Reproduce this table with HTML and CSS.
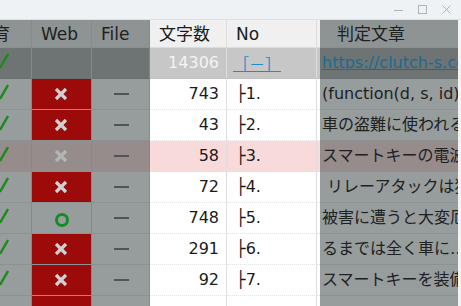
FILE: index.html
```html
<!DOCTYPE html>
<html lang="ja">
<head>
<meta charset="utf-8">
<link rel="stylesheet" href="styles.css">
</head>
<body>
<div class="window">
  <div class="titlebar">
    <div class="controls">
      <svg class="ctl" width="10" height="10" viewBox="0 0 10 10"><line x1="0" y1="5.5" x2="9" y2="5.5"/></svg>
      <svg class="ctl" width="10" height="10" viewBox="0 0 10 10"><rect x="0.5" y="0.5" width="8" height="8" fill="none"/></svg>
      <svg class="ctl" width="10" height="10" viewBox="0 0 10 10"><line x1="0.5" y1="0.5" x2="8.5" y2="8.5"/><line x1="8.5" y1="0.5" x2="0.5" y2="8.5"/></svg>
    </div>
  </div>
  <div class="table">
    <div class="row head">
      <div class="c c0 ov"><span class="clip">育</span></div>
      <div class="c web ov">Web</div>
      <div class="c file ov">File</div>
      <div class="c num">文字数</div>
      <div class="c no">No</div>
      <div class="c sp"></div>
      <div class="c txt ov">判定文章</div>
    </div>
    <div class="row sum">
      <div class="c c0 ov"><svg class="chk" width="12" height="16" viewBox="0 0 12 16"><line x1="3" y1="15" x2="11" y2="1"/></svg></div>
      <div class="c web ov"></div>
      <div class="c file ov"></div>
      <div class="c num">14306</div>
      <div class="c no"><a class="toggle">［－］</a></div>
      <div class="c sp"></div>
      <div class="c txt ov"><a class="url">https://clutch-s.com/</a></div>
    </div>
    <div class="row">
      <div class="c c0 ov"><svg class="chk" width="12" height="16" viewBox="0 0 12 16"><line x1="3" y1="15" x2="11" y2="1"/></svg></div>
      <div class="c web ov bad"><svg class="x" width="14" height="14" viewBox="0 0 14 14"><line x1="2" y1="2" x2="12" y2="12"/><line x1="12" y1="2" x2="2" y2="12"/></svg></div>
      <div class="c file ov"><span class="dash"></span></div>
      <div class="c num">743</div>
      <div class="c no">├1.</div>
      <div class="c sp"></div>
      <div class="c txt ov">(function(d, s, id) {</div>
    </div>
    <div class="row">
      <div class="c c0 ov"><svg class="chk" width="12" height="16" viewBox="0 0 12 16"><line x1="3" y1="15" x2="11" y2="1"/></svg></div>
      <div class="c web ov bad"><svg class="x" width="14" height="14" viewBox="0 0 14 14"><line x1="2" y1="2" x2="12" y2="12"/><line x1="12" y1="2" x2="2" y2="12"/></svg></div>
      <div class="c file ov"><span class="dash"></span></div>
      <div class="c num">43</div>
      <div class="c no">├2.</div>
      <div class="c sp"></div>
      <div class="c txt ov">車の盗難に使われる</div>
    </div>
    <div class="row pink">
      <div class="c c0 ov"><svg class="chk" width="12" height="16" viewBox="0 0 12 16"><line x1="3" y1="15" x2="11" y2="1"/></svg></div>
      <div class="c web ov"><svg class="x dim" width="14" height="14" viewBox="0 0 14 14"><line x1="2" y1="2" x2="12" y2="12"/><line x1="12" y1="2" x2="2" y2="12"/></svg></div>
      <div class="c file ov"><span class="dash"></span></div>
      <div class="c num">58</div>
      <div class="c no">├3.</div>
      <div class="c sp"></div>
      <div class="c txt ov">スマートキーの電波を</div>
    </div>
    <div class="row">
      <div class="c c0 ov"><svg class="chk" width="12" height="16" viewBox="0 0 12 16"><line x1="3" y1="15" x2="11" y2="1"/></svg></div>
      <div class="c web ov bad"><svg class="x" width="14" height="14" viewBox="0 0 14 14"><line x1="2" y1="2" x2="12" y2="12"/><line x1="12" y1="2" x2="2" y2="12"/></svg></div>
      <div class="c file ov"><span class="dash"></span></div>
      <div class="c num">72</div>
      <div class="c no">├4.</div>
      <div class="c sp"></div>
      <div class="c txt ov">&nbsp;リレーアタックは犯行</div>
    </div>
    <div class="row">
      <div class="c c0 ov"><svg class="chk" width="12" height="16" viewBox="0 0 12 16"><line x1="3" y1="15" x2="11" y2="1"/></svg></div>
      <div class="c web ov"><svg class="ok" width="16" height="16" viewBox="0 0 16 16"><circle cx="8" cy="8" r="5.5"/></svg></div>
      <div class="c file ov"><span class="dash"></span></div>
      <div class="c num">748</div>
      <div class="c no">├5.</div>
      <div class="c sp"></div>
      <div class="c txt ov">被害に遭うと大変厄介</div>
    </div>
    <div class="row">
      <div class="c c0 ov"><svg class="chk" width="12" height="16" viewBox="0 0 12 16"><line x1="3" y1="15" x2="11" y2="1"/></svg></div>
      <div class="c web ov bad"><svg class="x" width="14" height="14" viewBox="0 0 14 14"><line x1="2" y1="2" x2="12" y2="12"/><line x1="12" y1="2" x2="2" y2="12"/></svg></div>
      <div class="c file ov"><span class="dash"></span></div>
      <div class="c num">291</div>
      <div class="c no">├6.</div>
      <div class="c sp"></div>
      <div class="c txt ov">るまでは全く車に…盗難</div>
    </div>
    <div class="row">
      <div class="c c0 ov"><svg class="chk" width="12" height="16" viewBox="0 0 12 16"><line x1="3" y1="15" x2="11" y2="1"/></svg></div>
      <div class="c web ov bad"><svg class="x" width="14" height="14" viewBox="0 0 14 14"><line x1="2" y1="2" x2="12" y2="12"/><line x1="12" y1="2" x2="2" y2="12"/></svg></div>
      <div class="c file ov"><span class="dash"></span></div>
      <div class="c num">92</div>
      <div class="c no">├7.</div>
      <div class="c sp"></div>
      <div class="c txt ov">スマートキーを装備し</div>
    </div>
    <div class="row">
      <div class="c c0 ov"></div>
      <div class="c web ov bad"></div>
      <div class="c file ov"></div>
      <div class="c num"></div>
      <div class="c no"></div>
      <div class="c sp"></div>
      <div class="c txt ov"></div>
    </div>
  </div>
</div>
</body>
</html>
```

FILE: styles.css
```css
html, body {
  margin: 0;
  padding: 0;
}
body {
  width: 461px;
  height: 306px;
  overflow: hidden;
  background: #f3f3f3;
  font-family: "DejaVu Sans", "Noto Sans CJK JP", sans-serif;
  font-size: 16px;
  color: #1b1b1b;
}
.window {
  display: flex;
  flex-direction: column;
  height: 306px;
  overflow: hidden;
}
.titlebar {
  height: 19px;
  flex: none;
  background: #eef2f5;
  border-bottom: 1px solid #dde1e4;
  display: flex;
  justify-content: flex-end;
  align-items: center;
}
.controls {
  display: flex;
  gap: 14px;
  padding-right: 9px;
  padding-top: 1px;
}
.ctl {
  stroke: #aeb3b8;
  stroke-width: 1;
}
.table {
  width: 458px;
  overflow: hidden;
  flex: none;
}
.row {
  display: grid;
  grid-template-columns: 32px 60px 58px 77px 90px 3px 1fr;
  height: 31px;
}
.row.head {
  height: 28px;
}
.c {
  box-sizing: border-box;
  display: flex;
  align-items: center;
  white-space: nowrap;
  overflow: hidden;
  background: #ffffff;
  border-bottom: 1px dotted #e2e2e2;
  line-height: 1;
}
.c0, .web, .file, .num, .no {
  border-right: 1px solid #dedede;
}
/* dimmed (overlay) columns */
.ov {
  background: #979d9c;
  border-bottom: 1px solid #8c9291;
  color: #1d2121;
}
.c0.ov, .web.ov, .file.ov {
  border-right-color: #858b8a;
}
.head .c {
  background: #f0f0f0;
  border-bottom: 1px solid #dcdcdc;
  font-size: 17px;
  padding-top: 1px;
  justify-content: flex-start;
}
.head .ov {
  background: #8e9493;
  border-bottom-color: #8a908f;
}
.head .web, .head .file, .head .num, .head .no {
  padding-left: 9px;
  padding-right: 0;
}
.head .txt {
  padding-left: 17px;
}
.clip {
  margin-left: -7px;
}
.sum .c {
  background: #c7c7c7;
  border-bottom: 1px solid #c0c0c0;
}
.sum .ov {
  background: #6e7473;
  border-bottom-color: #6a706f;
}
.pink .c {
  background: #f9dada;
}
.pink .ov {
  background: #978c8c;
}
.num {
  justify-content: flex-end;
  padding-right: 7px;
}
.sum .num {
  color: #f4f4f4;
}
.no {
  padding-left: 9px;
}
.toggle {
  color: #1f8cd0;
  text-decoration: underline;
  margin-left: -3px;
  font-family: "Noto Sans CJK JP", sans-serif;
}
.txt {
  padding-left: 2px;
}
.url {
  color: #1b6a92;
  text-decoration: underline;
}
.web, .file {
  justify-content: center;
}
.web.bad {
  background: #9c0a0a;
}
.c0 .chk {
  margin-left: -3px;
  margin-top: -4px;
  stroke: #1c8a1c;
  stroke-width: 2.4;
}
.x {
  stroke: #cfd2d2;
  stroke-width: 3.2;
  margin-left: -1px;
}
.x.dim {
  stroke: #b3b6b6;
}
.ok {
  fill: none;
  stroke: #178a28;
  stroke-width: 3;
  margin-top: 3px;
}
.dash {
  width: 15px;
  height: 2px;
  background: #4f5454;
  margin-left: 1px;
}
```
